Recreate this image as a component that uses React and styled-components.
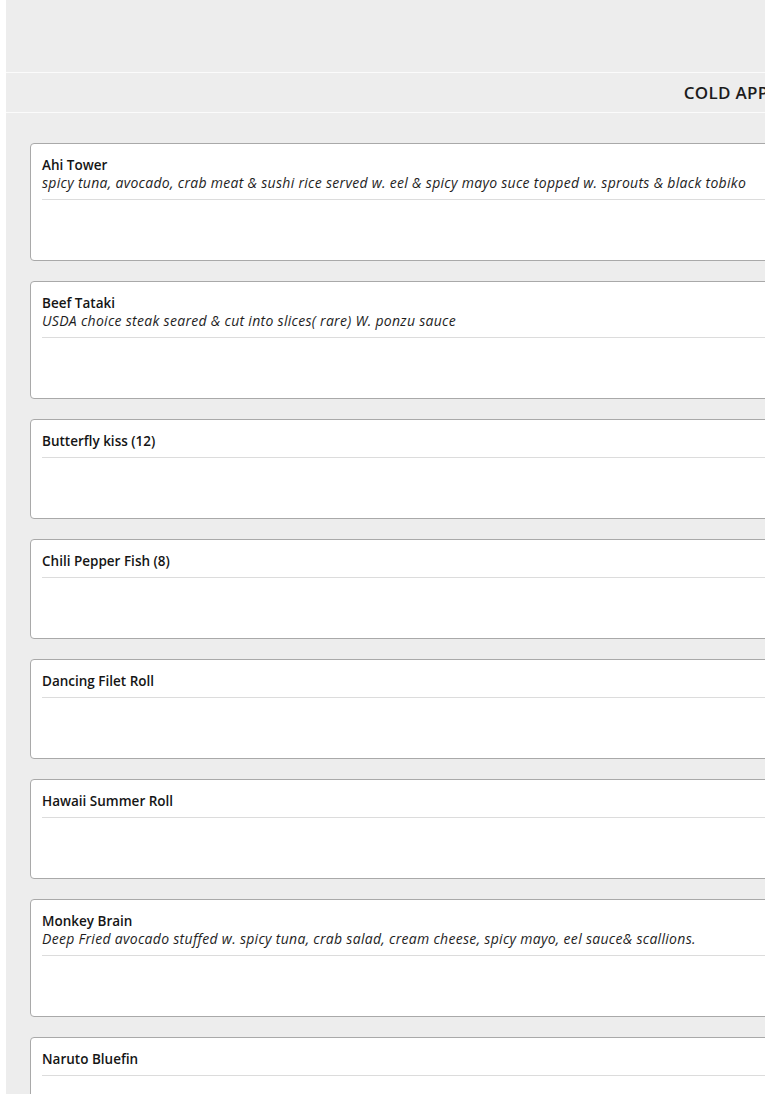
import React from "react";
import styled, { createGlobalStyle } from "styled-components";

const Global = createGlobalStyle`
  html, body { margin: 0; padding: 0; overflow: hidden; background: #fff; }
  body { font-family: "Open Sans", "Noto Sans", sans-serif; color: #1a1a1a; }
`;

const Page = styled.div`
  padding-left: 6px;
  width: 1506px;
`;

const Main = styled.main`
  background: #ededed;
  min-height: 1094px;
`;

const TopBar = styled.header`
  height: 72px;
  border-bottom: 1px solid #fbfbfb;
`;

const CategoryBar = styled.div`
  height: 39px;
  display: flex;
  align-items: center;
  justify-content: center;
  border-bottom: 1px solid #fbfbfb;
`;

const CategoryTitle = styled.h2`
  margin: 0;
  font-size: 17px;
  font-weight: 600;
  letter-spacing: 0.3px;
  color: #1c1c1c;
`;

const List = styled.section`
  padding: 30px 18px 0 24px;
  display: flex;
  flex-direction: column;
  gap: 20px;
`;

const Card = styled.article`
  background: #fff;
  border: 1px solid #a9a9a9;
  border-radius: 4px;
  padding: 12px 11px 0;
`;

const Name = styled.div`
  font-size: 13.5px;
  font-weight: 600;
  line-height: 18px;
  color: #151515;
`;

const Desc = styled.div`
  font-size: 14px;
  font-style: italic;
  letter-spacing: 0.3px;
  line-height: 18px;
  color: #1e1e1e;
`;

const Divider = styled.hr`
  margin: 7px 0 0;
  border: none;
  border-top: 1px solid #dcdcdc;
`;

const Actions = styled.div`
  display: grid;
  grid-template-columns: 1fr 1fr;
  gap: 8px;
  padding: 8px 0 12px;
`;

const Select = styled.div`
  grid-column: 2;
  height: 40px;
  box-sizing: border-box;
  border: 1px solid #e2e2e2;
  border-radius: 3px;
`;

const items = [
  { name: "Ahi Tower", desc: "spicy tuna, avocado, crab meat & sushi rice served w. eel & spicy mayo suce topped w. sprouts & black tobiko" },
  { name: "Beef Tataki", desc: "USDA choice steak seared & cut into slices( rare) W. ponzu sauce" },
  { name: "Butterfly kiss (12)" },
  { name: "Chili Pepper Fish (8)" },
  { name: "Dancing Filet Roll" },
  { name: "Hawaii Summer Roll" },
  { name: "Monkey Brain", desc: "Deep Fried avocado stuffed w. spicy tuna, crab salad, cream cheese, spicy mayo, eel sauce& scallions." },
  { name: "Naruto Bluefin" },
];

export default function App() {
  return (
    <Page>
      <Global />
      <Main>
        <TopBar />
        <CategoryBar>
          <CategoryTitle>COLD APPETIZERS</CategoryTitle>
        </CategoryBar>
        <List>
          {items.map((it) => (
            <Card key={it.name}>
              <Name>{it.name}</Name>
              {it.desc && <Desc>{it.desc}</Desc>}
              <Divider />
              <Actions>
                <Select />
              </Actions>
            </Card>
          ))}
        </List>
      </Main>
    </Page>
  );
}
